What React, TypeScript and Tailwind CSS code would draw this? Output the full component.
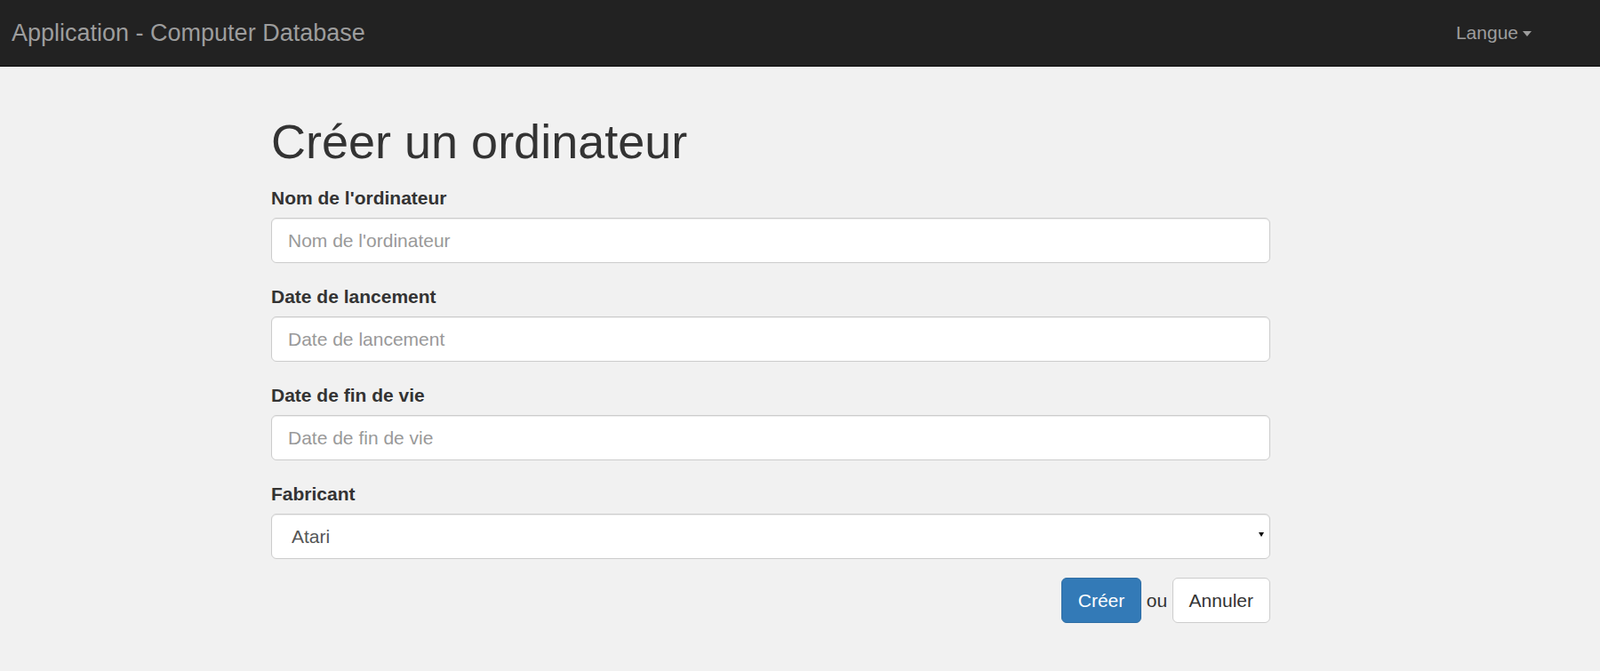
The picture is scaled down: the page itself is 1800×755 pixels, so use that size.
import { useState } from "react";

const font = { fontFamily: '"Liberation Sans", Arial, sans-serif' };

interface FieldProps {
  id: string;
  label: string;
}

function TextField({ id, label }: FieldProps) {
  const [value, setValue] = useState("");
  return (
    <div className="mb-[22.5px]">
      <label htmlFor={id} className="block h-[30px] leading-[30px] mb-[7.5px] text-[21px] font-bold text-[#333]">
        {label}
      </label>
      <input
        id={id}
        type="text"
        value={value}
        onChange={(e) => setValue(e.target.value)}
        placeholder={label}
        className="
          block w-full h-[51px] px-[18px]
          bg-white border border-[#ccc] rounded-[6px]
          text-[21px] text-[#555] placeholder-[#999]
          shadow-[inset_0_1px_1px_rgba(0,0,0,0.075)] outline-none
        "
      />
    </div>
  );
}

function CompanySelect() {
  const [company, setCompany] = useState("1");
  return (
    <div className="mb-[20.5px]">
      <label htmlFor="companyId" className="block h-[30px] leading-[30px] mb-[7.5px] text-[21px] font-bold text-[#333]">
        Fabricant
      </label>
      <div className="relative">
        <select
          id="companyId"
          value={company}
          onChange={(e) => setCompany(e.target.value)}
          className="
            block w-full h-[51px] pl-[22px] pr-[30px] appearance-none
            bg-white border border-[#ccc] rounded-[6px]
            text-[21px] text-[#555] outline-none
            shadow-[inset_0_1px_1px_rgba(0,0,0,0.075)]
          "
        >
          <option value="1">Atari</option>
          <option value="2">Apple Inc.</option>
          <option value="3">IBM</option>
        </select>
        <svg
          className="absolute right-[7px] top-[21px] pointer-events-none"
          width="6"
          height="5"
          viewBox="0 0 6 5"
        >
          <polygon points="0,0 6,0 3,5" fill="#000" />
        </svg>
      </div>
    </div>
  );
}

export default function App() {
  return (
    <div className="min-h-[755px] bg-[#f1f1f1] text-[#333]" style={font}>
      <nav className="flex items-center justify-between h-[75px] bg-[#222] border-b border-[#080808]">
        <a href="#" className="pl-[13px] text-[27px] text-[#9d9d9d]">
          Application - Computer Database
        </a>
        <button className="flex items-center pr-[77px] text-[21px] text-[#9d9d9d]">
          Langue
          <span className="ml-[5px] mt-[2px] w-0 h-0 border-x-[5px] border-x-transparent border-t-[6px] border-t-[#9d9d9d]" />
        </button>
      </nav>

      <section className="ml-[305px] w-[1124px]">
        <h1 className="mt-[55px] mb-[18.6px] text-[54px] leading-[1.1] font-normal text-[#333]">
          Créer un ordinateur
        </h1>
        <form onSubmit={(e) => e.preventDefault()}>
          <TextField id="computerName" label="Nom de l'ordinateur" />
          <TextField id="introduced" label="Date de lancement" />
          <TextField id="discontinued" label="Date de fin de vie" />
          <CompanySelect />
          <div className="flex justify-end items-center text-[21px]">
            <button
              type="submit"
              className="h-[51px] px-[18px] bg-[#337ab7] border border-[#2e6da4] rounded-[6px] text-white"
            >
              Créer
            </button>
            <span className="mx-[5.5px] text-[#333]">ou</span>
            <a
              href="#"
              className="flex items-center h-[51px] px-[18px] bg-white border border-[#ccc] rounded-[6px] text-[#333]"
            >
              Annuler
            </a>
          </div>
        </form>
      </section>
    </div>
  );
}
